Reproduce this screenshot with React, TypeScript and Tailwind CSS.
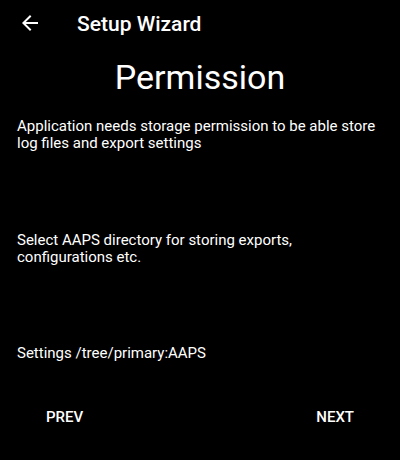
import { MdArrowBack } from 'react-icons/md';

export default function App() {
  return (
    <div className="w-[400px] h-[460px] bg-black text-white flex flex-col overflow-hidden" style={{ fontFamily: 'Roboto, sans-serif' }}>
      <div className="h-[46px] flex items-center shrink-0">
        <MdArrowBack className="ml-[18px] w-6 h-6" />
        <span className="ml-[35px] mt-[4px] text-[21px] font-medium">Setup Wizard</span>
      </div>
      <h1 className="text-center text-[34px] leading-[40px] mt-[11px]">Permission</h1>
      <p className="px-[17px] text-[15px] leading-[17px] mt-[21px]">
        Application needs storage permission to be able store log files and export settings
      </p>
      <p className="px-[17px] text-[15px] leading-[17px] mt-[80px]">
        Select AAPS directory for storing exports, configurations etc.
      </p>
      <p className="px-[17px] text-[15px] leading-[17px] mt-[79px]">Settings /tree/primary:AAPS</p>
      <div className="flex justify-between mt-[47px] px-[46px]">
        <button className="text-[15px] leading-[17px] font-medium">PREV</button>
        <button className="text-[15px] leading-[17px] font-medium">NEXT</button>
      </div>
    </div>
  );
}
